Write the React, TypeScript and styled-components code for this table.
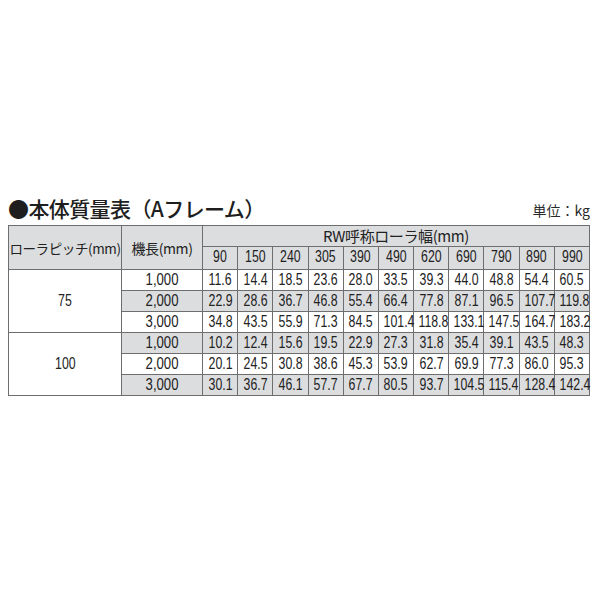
import React from 'react';
import styled, { createGlobalStyle } from 'styled-components';

const GlobalStyle = createGlobalStyle`
  body {
    margin: 0;
    background: #ffffff;
    color: #222222;
    font-family: 'Noto Sans CJK JP', sans-serif;
  }
`;

const Page = styled.div`
  width: 582px;
  padding: 196px 0 0 8px;
`;

const TitleBar = styled.div`
  display: flex;
  justify-content: space-between;
  align-items: flex-end;
  height: 25px;
  margin-bottom: 4px;
`;

const Title = styled.h1`
  margin: 0;
  font-size: 21px;
  font-weight: 500;
  line-height: 25px;
  letter-spacing: -0.6px;
  color: #1e1e1e;
`;

const Unit = styled.span`
  font-size: 14px;
  line-height: 18px;
  color: #2a2a2a;
  margin-bottom: 2px;
`;

const Table = styled.table`
  width: 582px;
  border-collapse: collapse;
  table-layout: fixed;
  border: 1px solid #6e6e6e;
`;

const HeadCell = styled.th<{ $h?: number; $size?: number }>`
  background: #dcdddf;
  border: 1px solid #6e6e6e;
  font-weight: 400;
  font-size: ${p => p.$size ?? 13.5}px;
  line-height: 18px;
  color: #222;
  padding: 0;
  height: ${p => p.$h ?? 21}px;
  white-space: nowrap;
  letter-spacing: -0.4px;
  vertical-align: middle;
`;

const Cell = styled.td<{ $gray?: boolean }>`
  background: ${p => (p.$gray ? '#dcdddf' : '#ffffff')};
  border: 1px solid #6e6e6e;
  text-align: center;
  vertical-align: middle;
  padding: 0;
  height: 20px;
  font-size: 16px;
  line-height: 16px;
  color: #222;
  white-space: nowrap;
`;

// condensed digits, as in the printed table
const Num = styled.span<{ $scale?: number }>`
  display: inline-block;
  vertical-align: top;
  font-family: 'Liberation Sans', Arial, sans-serif;
  font-size: 16px;
  line-height: 16px;
  letter-spacing: 0;
  transform: scaleX(${p => p.$scale ?? 0.77});
  transform-origin: center;
`;

const widths = ['90', '150', '240', '305', '390', '490', '620', '690', '790', '890', '990'];

const groups = [
  {
    pitch: '75',
    rows: [
      { len: '1,000', vals: ['11.6', '14.4', '18.5', '23.6', '28.0', '33.5', '39.3', '44.0', '48.8', '54.4', '60.5'] },
      { len: '2,000', vals: ['22.9', '28.6', '36.7', '46.8', '55.4', '66.4', '77.8', '87.1', '96.5', '107.7', '119.8'] },
      { len: '3,000', vals: ['34.8', '43.5', '55.9', '71.3', '84.5', '101.4', '118.8', '133.1', '147.5', '164.7', '183.2'] },
    ],
    gray: [false, true, false],
  },
  {
    pitch: '100',
    rows: [
      { len: '1,000', vals: ['10.2', '12.4', '15.6', '19.5', '22.9', '27.3', '31.8', '35.4', '39.1', '43.5', '48.3'] },
      { len: '2,000', vals: ['20.1', '24.5', '30.8', '38.6', '45.3', '53.9', '62.7', '69.9', '77.3', '86.0', '95.3'] },
      { len: '3,000', vals: ['30.1', '36.7', '46.1', '57.7', '67.7', '80.5', '93.7', '104.5', '115.4', '128.4', '142.4'] },
    ],
    gray: [true, false, true],
  },
];

const App = () => {
  return (
    <Page>
      <GlobalStyle />
      <TitleBar>
        <Title>●本体質量表（Aフレーム）</Title>
        <Unit>単位：kg</Unit>
      </TitleBar>
      <Table>
        <colgroup>
          <col style={{ width: 113 }} />
          <col style={{ width: 81 }} />
          {widths.map(w => (
            <col key={w} />
          ))}
        </colgroup>
        <thead>
          <tr>
            <HeadCell rowSpan={2} $size={13.5}>ローラピッチ(mm)</HeadCell>
            <HeadCell rowSpan={2} $size={14}>機長(mm)</HeadCell>
            <HeadCell colSpan={11} $h={20} $size={15}>RW呼称ローラ幅(mm)</HeadCell>
          </tr>
          <tr>
            {widths.map(w => (
              <HeadCell key={w} $h={22}>
                <Num>{w}</Num>
              </HeadCell>
            ))}
          </tr>
        </thead>
        <tbody>
          {groups.map(g =>
            g.rows.map((r, i) => (
              <tr key={g.pitch + r.len}>
                {i === 0 && (
                  <Cell rowSpan={3}>
                    <Num>{g.pitch}</Num>
                  </Cell>
                )}
                <Cell $gray={g.gray[i]}>
                  <Num $scale={0.82}>{r.len}</Num>
                </Cell>
                {r.vals.map((v, j) => (
                  <Cell key={j} $gray={g.gray[i]}>
                    <Num>{v}</Num>
                  </Cell>
                ))}
              </tr>
            ))
          )}
        </tbody>
      </Table>
    </Page>
  );
};

export default App;
